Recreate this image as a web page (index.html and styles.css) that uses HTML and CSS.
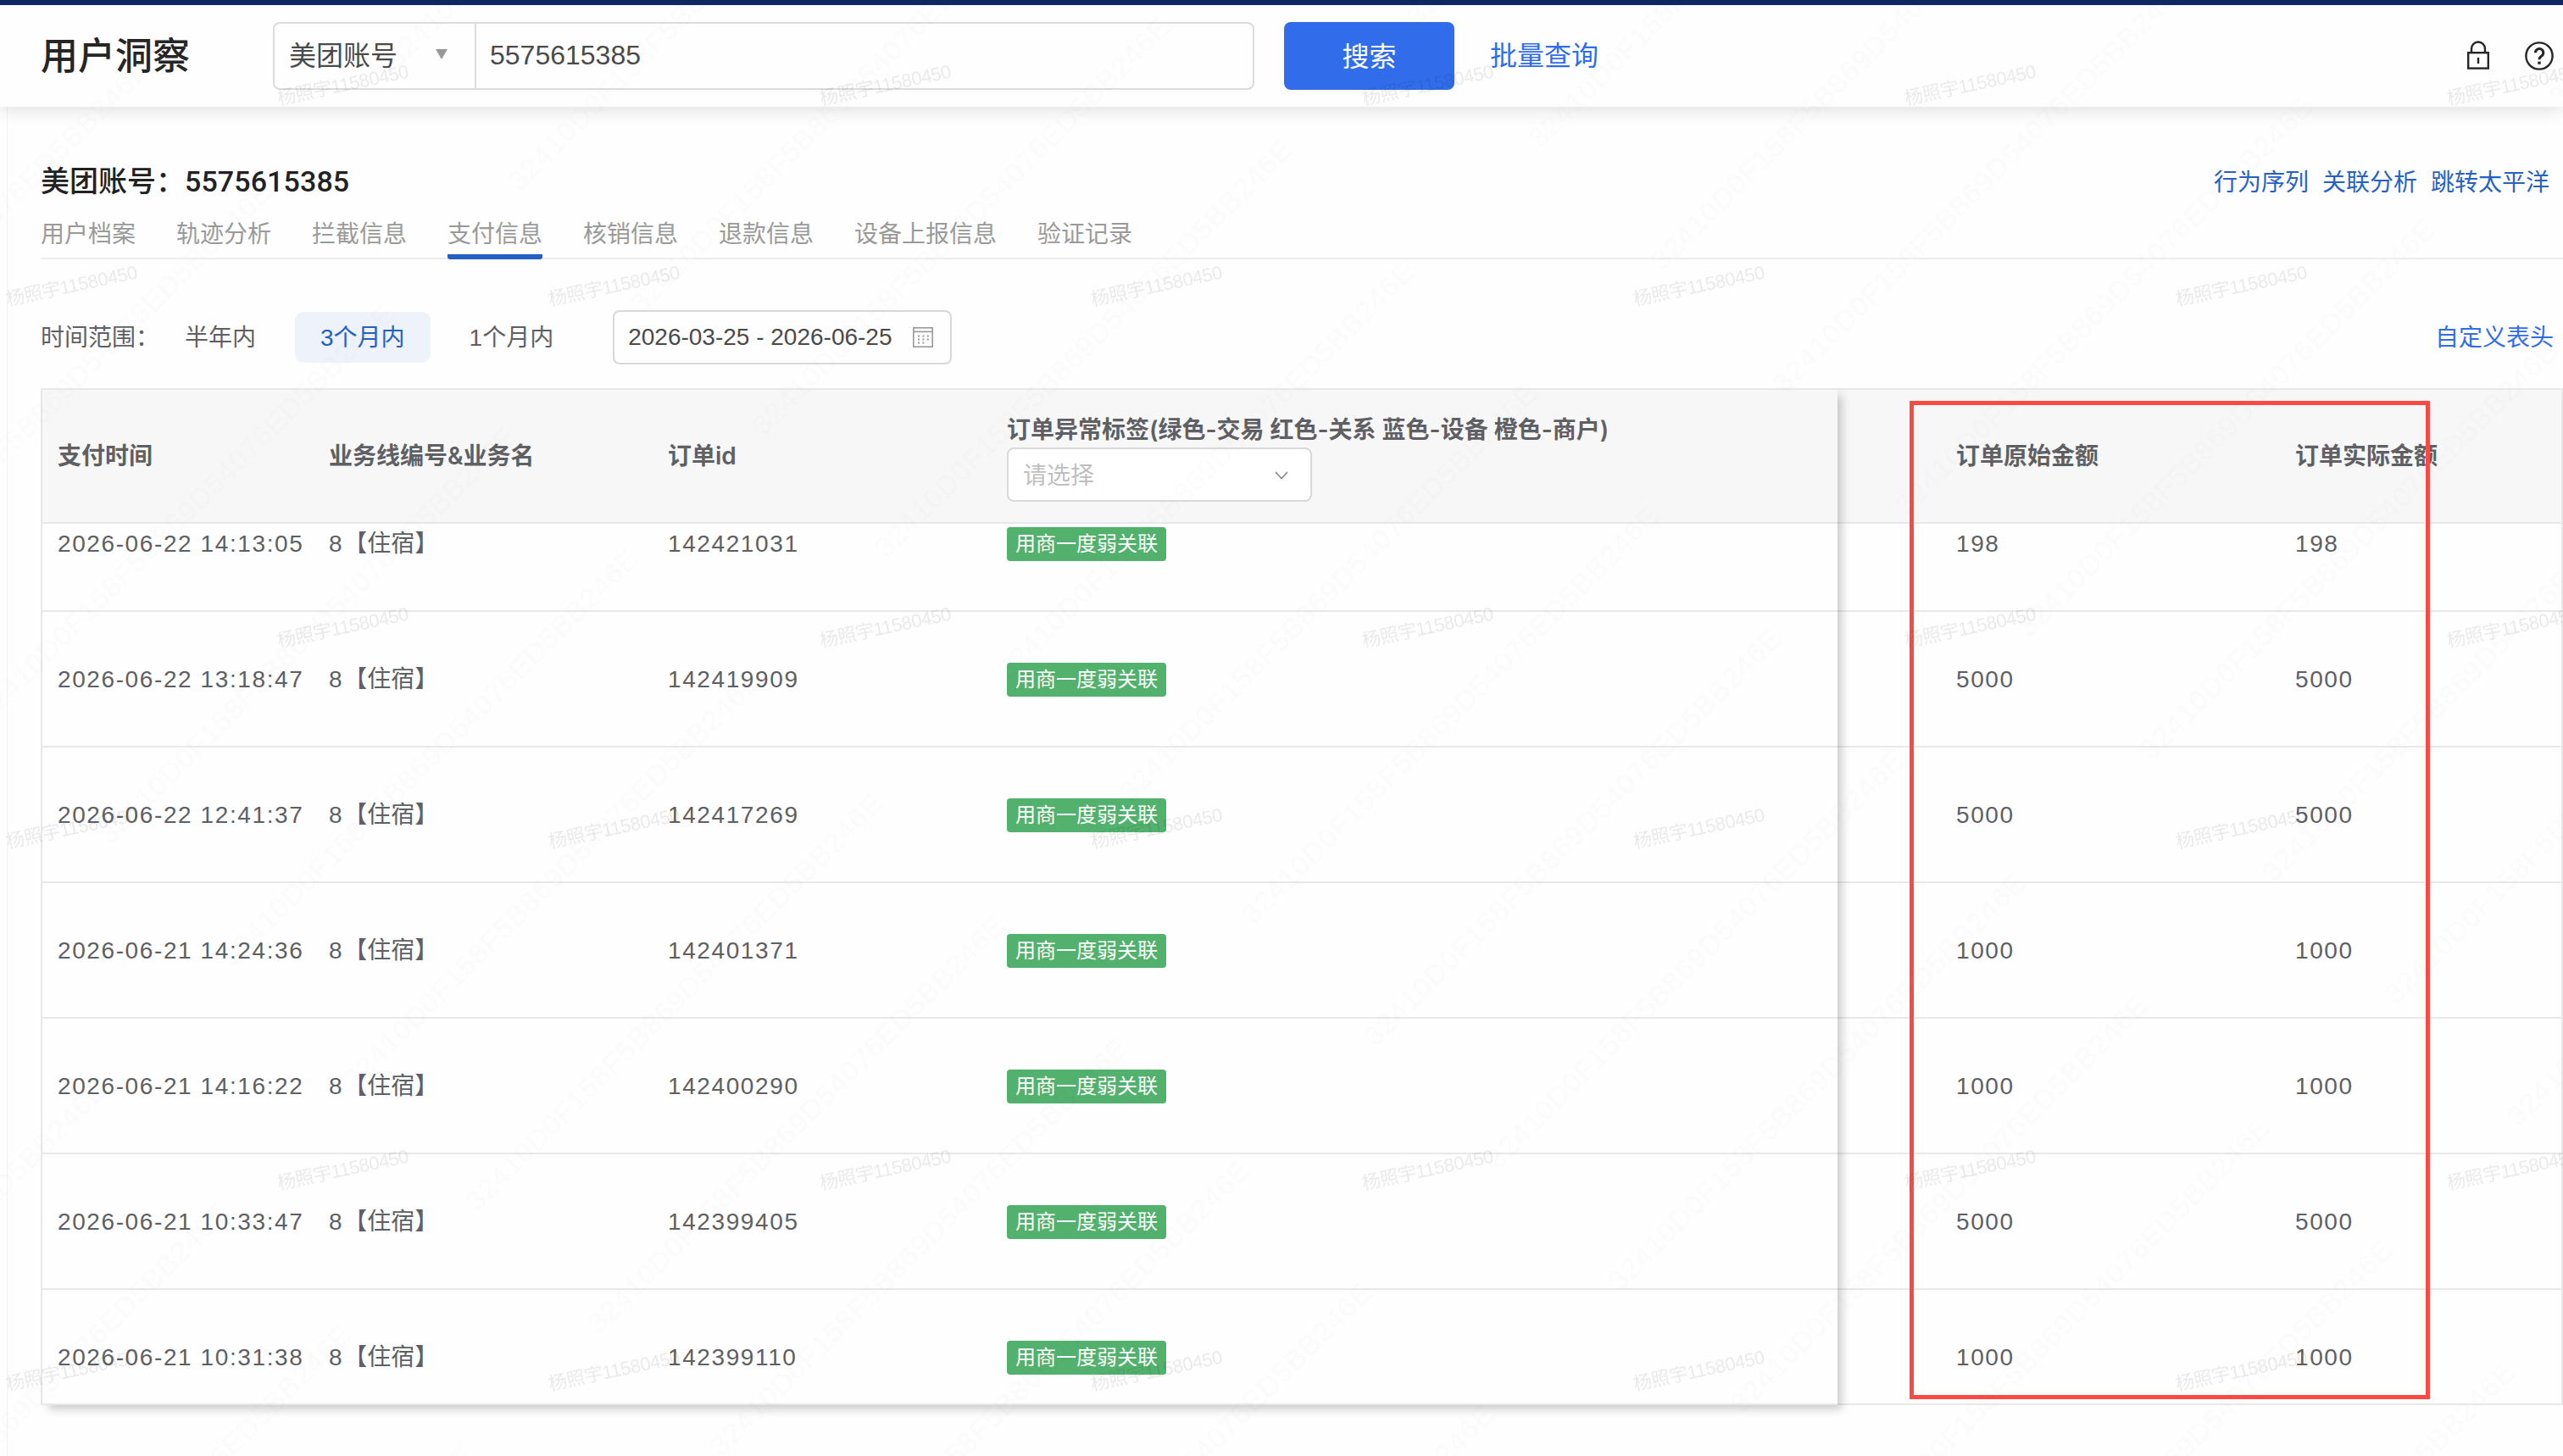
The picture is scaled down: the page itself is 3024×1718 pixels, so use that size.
FILE: index.html
```html
<!DOCTYPE html>
<html lang="zh-CN">
<head>
    <meta charset="UTF-8">
    <meta name="viewport" content="width=device-width, initial-scale=1.0">
    <title>用户洞察</title>
    <link rel="stylesheet" href="styles.css">
</head>
<body>
    <header class="header">
        <h1>用户洞察</h1>
        <div class="search-box">
            <div class="search-type">
                <span>美团账号</span>
                <i class="caret"></i>
            </div>
            <div class="search-value">5575615385</div>
        </div>
        <button class="search-btn" type="button">搜索</button>
        <a class="batch-link">批量查询</a>
        <div class="header-icons">
            <svg class="icon-lock" width="28" height="36" viewBox="0 0 28 36" fill="none" stroke="#262626" stroke-width="2.4">
                <rect x="2.2" y="15.2" width="23.6" height="18.4"/>
                <path d="M6 15V10.5a8 8 0 0 1 16 0V15M14 21v7"/>
            </svg>
            <svg width="36" height="36" viewBox="0 0 36 36" fill="none" stroke="#262626">
                <circle cx="18" cy="18" r="15.6" stroke-width="2.4"/>
                <path d="M13.4 14.2a4.7 4.7 0 1 1 7.4 3.8c-2 1.3-2.8 2.1-2.8 4.2" stroke-width="3"/>
                <path d="M18 24.6v3.2" stroke-width="3.4"/>
            </svg>
        </div>
    </header>

    <main class="content">
        <div class="account-row">
            <h2>美团账号：<span>5575615385</span></h2>
            <div class="account-links">
                <a>行为序列</a>
                <a>关联分析</a>
                <a>跳转太平洋</a>
            </div>
        </div>

        <nav class="tabs">
            <a>用户档案</a>
            <a>轨迹分析</a>
            <a>拦截信息</a>
            <a class="active">支付信息</a>
            <a>核销信息</a>
            <a>退款信息</a>
            <a>设备上报信息</a>
            <a>验证记录</a>
        </nav>

        <div class="filters">
            <span class="filter-label">时间范围：</span>
            <div class="ranges">
                <span class="range">半年内</span>
                <span class="range active">3个月内</span>
                <span class="range">1个月内</span>
            </div>
            <div class="date-picker">
                <span>2026-03-25 - 2026-06-25</span>
                <svg width="24" height="24" viewBox="0 0 24 24" fill="none" stroke="#999" stroke-width="1.6">
                    <rect x="0.8" y="0.8" width="22.4" height="22.4"/>
                    <path d="M1 5.4h22"/>
                    <path d="M6 10.5h14M6 14.5h14M6 18.5h9" stroke-width="1.8" stroke-dasharray="2 3.4"/>
                </svg>
            </div>
            <a class="custom-head">自定义表头</a>
        </div>

        <div class="table">
            <div class="table-fixed">
                <div class="thead fixed-cols">
                    <div class="cell">支付时间</div>
                    <div class="cell">业务线编号&amp;业务名</div>
                    <div class="cell">订单id</div>
                    <div class="cell tag-head">
                        <span>订单异常标签(绿色-交易 红色-关系 蓝色-设备 橙色-商户)</span>
                        <div class="tag-select">
                            <span>请选择</span>
                            <svg width="18" height="12" viewBox="0 0 18 12" fill="none" stroke="#8c8c8c" stroke-width="1.8">
                                <path d="M2 2l7 7.5L16 2"/>
                            </svg>
                        </div>
                    </div>
                </div>
                <div class="tbody">
                    <div class="row fixed-cols">
                        <div class="cell">2026-06-22 14:13:05</div>
                        <div class="cell">8<b>【住宿】</b></div>
                        <div class="cell">142421031</div>
                        <div class="cell"><span class="tag">用商一度弱关联</span></div>
                    </div>
                    <div class="row fixed-cols">
                        <div class="cell">2026-06-22 13:18:47</div>
                        <div class="cell">8<b>【住宿】</b></div>
                        <div class="cell">142419909</div>
                        <div class="cell"><span class="tag">用商一度弱关联</span></div>
                    </div>
                    <div class="row fixed-cols">
                        <div class="cell">2026-06-22 12:41:37</div>
                        <div class="cell">8<b>【住宿】</b></div>
                        <div class="cell">142417269</div>
                        <div class="cell"><span class="tag">用商一度弱关联</span></div>
                    </div>
                    <div class="row fixed-cols">
                        <div class="cell">2026-06-21 14:24:36</div>
                        <div class="cell">8<b>【住宿】</b></div>
                        <div class="cell">142401371</div>
                        <div class="cell"><span class="tag">用商一度弱关联</span></div>
                    </div>
                    <div class="row fixed-cols">
                        <div class="cell">2026-06-21 14:16:22</div>
                        <div class="cell">8<b>【住宿】</b></div>
                        <div class="cell">142400290</div>
                        <div class="cell"><span class="tag">用商一度弱关联</span></div>
                    </div>
                    <div class="row fixed-cols">
                        <div class="cell">2026-06-21 10:33:47</div>
                        <div class="cell">8<b>【住宿】</b></div>
                        <div class="cell">142399405</div>
                        <div class="cell"><span class="tag">用商一度弱关联</span></div>
                    </div>
                    <div class="row fixed-cols">
                        <div class="cell">2026-06-21 10:31:38</div>
                        <div class="cell">8<b>【住宿】</b></div>
                        <div class="cell">142399110</div>
                        <div class="cell"><span class="tag">用商一度弱关联</span></div>
                    </div>
                </div>
            </div>
            <div class="table-scroll">
                <div class="thead scroll-cols">
                    <div class="cell">订单原始金额</div>
                    <div class="cell">订单实际金额</div>
                </div>
                <div class="tbody">
                    <div class="row scroll-cols">
                        <div class="cell">198</div>
                        <div class="cell">198</div>
                    </div>
                    <div class="row scroll-cols">
                        <div class="cell">5000</div>
                        <div class="cell">5000</div>
                    </div>
                    <div class="row scroll-cols">
                        <div class="cell">5000</div>
                        <div class="cell">5000</div>
                    </div>
                    <div class="row scroll-cols">
                        <div class="cell">1000</div>
                        <div class="cell">1000</div>
                    </div>
                    <div class="row scroll-cols">
                        <div class="cell">1000</div>
                        <div class="cell">1000</div>
                    </div>
                    <div class="row scroll-cols">
                        <div class="cell">5000</div>
                        <div class="cell">5000</div>
                    </div>
                    <div class="row scroll-cols">
                        <div class="cell">1000</div>
                        <div class="cell">1000</div>
                    </div>
                </div>
            </div>
        </div>
    </main>

    <!-- watermark layer -->
    <svg class="watermark" width="3024" height="1718">
        <defs>
            <pattern id="wm-user" width="640" height="640" patternUnits="userSpaceOnUse">
                <text class="wm-user" transform="translate(329 124) rotate(-12)" textLength="158">杨照宇11580450</text>
                <text class="wm-user" transform="translate(9 361) rotate(-12)" textLength="158">杨照宇11580450</text>
            </pattern>
            <pattern id="wm-code" width="887" height="204" patternUnits="userSpaceOnUse" patternTransform="rotate(-45) translate(273 0)">
                <text class="wm-code" x="0" y="186" textLength="680">32410D0F158F5B869D54076ED5BB246E</text>
            </pattern>
        </defs>
        <rect width="3024" height="1718" fill="url(#wm-user)"/>
        <rect width="3024" height="1718" fill="url(#wm-code)"/>
    </svg>

    <!-- highlight around the amount columns -->
    <div class="highlight"></div>
</body>
</html>
```
FILE: styles.css
```css
* {
    box-sizing: border-box;
    margin: 0;
    padding: 0;
}

body {
    position: relative;
    width: 3024px;
    height: 1718px;
    overflow: hidden;
    background: #fefefe;
    border-top: 6px solid #0f2862;
    font-family: "Liberation Sans", "Noto Sans CJK SC", sans-serif;
    font-size: 28px;
    line-height: 40px;
    color: #5f6064;
    display: flex;
    flex-direction: column;
}

/* header */
.header {
    position: relative;
    z-index: 1;
    height: 120px;
    flex-shrink: 0;
    display: flex;
    align-items: center;
    padding: 0 10px 0 48px;
    background: #fefefe;
    box-shadow: 0 2px 20px rgba(0, 0, 0, 0.14);
}

h1 {
    width: 274px;
    padding-top: 2px;
    font-size: 44px;
    font-weight: 500;
    color: #262626;
}

.search-box {
    width: 1158px;
    height: 80px;
    display: flex;
    border: 2px solid #dcdcdc;
    border-radius: 8px;
    font-size: 32px;
    color: #4a4a4a;
}

.search-type {
    width: 238px;
    display: flex;
    align-items: center;
    justify-content: space-between;
    padding: 0 32px 0 17px;
    border-right: 2px solid #dcdcdc;
}

.caret {
    border: 7px solid transparent;
    border-top: 12px solid #999;
    border-bottom: 0;
    margin-bottom: 4px;
}

.search-value {
    padding-left: 16px;
    line-height: 75px;
}

.search-btn {
    width: 201px;
    height: 80px;
    margin-left: 35px;
    padding-bottom: 4px;
    border: none;
    border-radius: 8px;
    background: #316dea;
    color: #fff;
    font-family: inherit;
    font-size: 32px;
}

.batch-link {
    margin-left: 42px;
    font-size: 32px;
    color: #316dea;
}

.header-icons {
    margin-left: auto;
    display: flex;
    gap: 40px;
}

.icon-lock {
    margin-top: -1px;
}

/* account */
.content {
    flex: 1;
    margin-left: 8px;
    padding-left: 39px;
    border-left: 1px solid #f2f2f2;
}

.account-row {
    display: flex;
    justify-content: space-between;
    align-items: center;
    height: 48px;
    margin-top: 64px;
    padding-right: 16px;
}

h2 {
    font-size: 34px;
    font-weight: 500;
    color: #222;
}

h2 span {
    font-family: Roboto, sans-serif;
    letter-spacing: 0.1px;
}

.account-links {
    display: flex;
    gap: 16px;
    padding-top: 3px;
    color: #2562c4;
}

.tabs {
    display: flex;
    gap: 48px;
    height: 68px;
    border-bottom: 2px solid #ededed;
    color: #9a9a9a;
}

.tabs a {
    height: 68px;
    line-height: 77px;
}

.tabs .active {
    border-bottom: 6px solid #2461c2;
    border-radius: 3px;
}

/* filters */
.filters {
    display: flex;
    align-items: center;
    height: 64px;
    margin-top: 60px;
    padding-right: 11px;
}

.filter-label {
    width: 140px;
    padding-top: 2px;
}

.ranges {
    display: flex;
    gap: 16px;
}

.range {
    height: 60px;
    padding: 0 30px;
    line-height: 61px;
    border-radius: 10px;
}

.range.active {
    background: #edf2fb;
    color: #2461c2;
}

.date-picker {
    width: 400px;
    height: 64px;
    margin-left: 40px;
    padding: 0 20px 0 16px;
    display: flex;
    align-items: center;
    justify-content: space-between;
    border: 2px solid #d9d9d9;
    border-radius: 8px;
    color: #4a4a4a;
}

.custom-head {
    margin-left: auto;
    padding-top: 2px;
    color: #316dea;
}

/* table */
.table {
    display: flex;
    height: 1200px;
    margin-top: 28px;
}

.table-fixed {
    position: relative;
    z-index: 1;
    width: 2120px;
    border: 2px solid #e8e8e8;
    border-right: none;
    box-shadow: 7px 7px 10px -2px rgba(0, 0, 0, 0.2);
}

.table-scroll {
    width: 856px;
    border: 2px solid #e8e8e8;
    border-left: none;
}

.thead {
    height: 158px;
    background: #f7f7f7;
    border-bottom: 2px solid #e8e8e8;
    font-family: Inter, "Noto Sans CJK SC", sans-serif;
    font-weight: 600;
}

.tbody {
    height: 1038px;
    overflow: hidden;
    background: #fefefe;
}

/* body is scrolled a bit under the header */
.tbody .row:first-child {
    margin-top: -56px;
}

.row {
    height: 160px;
    border-bottom: 2px solid #e8e8e8;
    letter-spacing: 1.6px;
}

.row b {
    font-weight: 400;
    letter-spacing: 0;
}

.fixed-cols {
    display: grid;
    grid-template-columns: 318px 400px 400px 1fr;
    align-items: center;
}

.scroll-cols {
    display: grid;
    grid-template-columns: 400px 1fr;
    align-items: center;
    padding-left: 120px;
}

.cell {
    padding-top: 2px;
    padding-left: 20px;
    white-space: nowrap;
}

.fixed-cols .cell:first-child {
    padding-left: 18px;
}

.thead .cell {
    padding-top: 0;
}

.tag-head > span {
    display: block;
    height: 41px;
    line-height: 40px;
}

.tag-select {
    width: 360px;
    height: 64px;
    margin-bottom: -3px;
    padding: 2px 25px 0 17px;
    display: flex;
    align-items: center;
    justify-content: space-between;
    background: #fff;
    border: 2px solid #d9d9d9;
    border-radius: 8px;
    color: #bfbfbf;
    font-weight: 400;
}

.tag {
    display: block;
    width: 188px;
    height: 40px;
    padding-left: 10px;
    line-height: 40px;
    border-radius: 4px;
    background: #51b16d;
    color: #fff;
    font-size: 24px;
    letter-spacing: 0;
}

/* overlays */
.watermark {
    position: absolute;
    top: -6px;
    left: 0;
    z-index: 5;
    pointer-events: none;
}

.wm-user {
    font-size: 22px;
    fill: rgba(0, 0, 0, 0.08);
}

.wm-code {
    font-size: 34px;
    fill: rgba(0, 0, 0, 0.01);
}

.highlight {
    position: absolute;
    z-index: 4;
    top: 467px;
    left: 2253px;
    width: 614px;
    height: 1178px;
    border: 5px solid #fb4a43;
}
```
